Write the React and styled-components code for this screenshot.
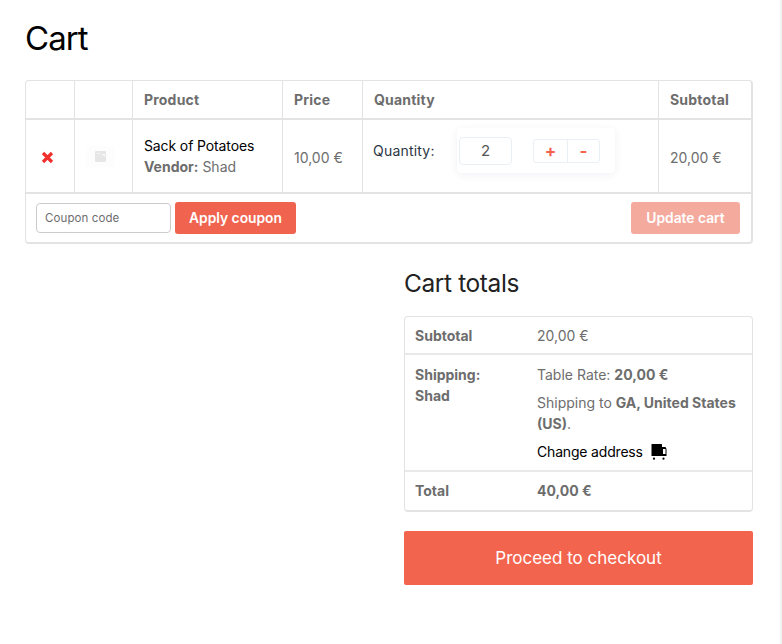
import styled, { createGlobalStyle } from "styled-components";

const GlobalStyle = createGlobalStyle`
  html, body {
    margin: 0;
    padding: 0;
    background: #fff;
  }
  * {
    box-sizing: border-box;
  }
`;

const Page = styled.div`
  width: 782px;
  height: 644px;
  overflow: hidden;
  padding: 0 27px 0 25px;
  border-right: 2px solid #f2f2f2;
  font-family: Inter, "Liberation Sans", sans-serif;
  font-size: 14px;
  color: #6d6d6d;
`;

const Title = styled.h1`
  margin: 0;
  padding-top: 16px;
  height: 80px;
  font-size: 33px;
  line-height: 44px;
  font-weight: 400;
  letter-spacing: -0.9px;
  color: #000;
`;

const Table = styled.table`
  width: 100%;
  table-layout: fixed;
  border-collapse: separate;
  border-spacing: 0;
  border: 1px solid #e3e3e3;
  border-bottom-width: 2px;
  border-right-width: 2px;
  border-radius: 4px;
`;

const HeadCell = styled.th`
  width: ${({ $width }) => $width}px;
  height: 39px;
  padding: 0 11px;
  text-align: left;
  font-weight: 700;
  font-size: 14px;
  letter-spacing: 0.2px;
  border-bottom: 2px solid #e3e3e3;
  border-right: ${({ $last }) => ($last ? "none" : "1px solid #e3e3e3")};
`;

const Cell = styled.td`
  height: 74px;
  padding: ${({ $drop }) => ($drop ? "2px" : "0")} 11px 0;
  border-bottom: 2px solid #e3e3e3;
  border-right: ${({ $last }) => ($last ? "none" : "1px solid #e3e3e3")};
`;

const RemoveCell = styled(Cell)`
  padding-left: 15px;
  line-height: 0;
`;

const ThumbCell = styled(Cell)`
  padding-left: 11px;
  line-height: 0;
`;

const ProductName = styled.div`
  color: #000;
  line-height: 21px;
  letter-spacing: -0.12px;
`;

const Vendor = styled.div`
  line-height: 21px;
`;

const QuantityRow = styled.div`
  display: flex;
  align-items: center;
  margin: -11px 0 0 -1px;
  color: #2c3745;
`;

const QuantityLabel = styled.span`
  width: 84px;
  letter-spacing: 0.2px;
`;

const QuantityBox = styled.div`
  display: flex;
  align-items: center;
  width: 158px;
  height: 45px;
  padding: 0 2px;
  border-radius: 5px;
  background: #fff;
  box-shadow: 0 2px 8px rgba(60, 80, 110, 0.08);
`;

const QuantityValue = styled.div`
  display: flex;
  align-items: center;
  justify-content: center;
  width: 53px;
  height: 28px;
  margin-right: 21px;
  border: 1px solid #eaeff4;
  border-radius: 4px;
  font-size: 15px;
  color: #555;
`;

const Stepper = styled.div`
  display: flex;
  height: 24px;
  border: 1px solid #eaf0f5;
  border-radius: 3px;
`;

const StepButton = styled.button`
  width: ${({ $width }) => $width}px;
  padding: 0;
  border: none;
  border-right: ${({ $divider }) => ($divider ? "1px solid #eaf0f5" : "none")};
  background: none;
  font-family: inherit;
  font-size: 17px;
  line-height: 20px;
  font-weight: 700;
  color: #f4634c;
`;

const ActionsCell = styled.td`
  padding: 0;
`;

const ActionsRow = styled.div`
  display: flex;
  align-items: center;
  justify-content: space-between;
  height: 48px;
  padding: 0 11px 0 10px;
`;

const CouponGroup = styled.div`
  display: flex;
  align-items: center;
  gap: 4px;
`;

const CouponInput = styled.input`
  width: 135px;
  height: 30px;
  padding: 0 8px;
  border: 1px solid #cfcbcb;
  border-radius: 4px;
  outline: none;
  font-family: inherit;
  font-size: 11.5px;
  letter-spacing: 0.1px;

  &::placeholder {
    color: #6d6d6d;
    opacity: 1;
  }
`;

const Button = styled.button`
  height: 32px;
  width: ${({ $width }) => $width}px;
  padding: 0;
  border: none;
  border-radius: 3px;
  background: ${({ $muted }) => ($muted ? "#f5aa9e" : "#f0644f")};
  color: #fff;
  font-family: inherit;
  font-size: 13.8px;
  font-weight: 600;
`;

const Totals = styled.section`
  width: 349px;
  margin: 21px 0 0 auto;
`;

const TotalsTitle = styled.h2`
  margin: 0 0 15px;
  font-size: 24.5px;
  line-height: 36px;
  font-weight: 400;
  letter-spacing: -0.4px;
  color: #222;
`;

const TotalsBox = styled.div`
  border: 1px solid #e3e3e3;
  border-bottom-width: 2px;
  border-radius: 4px;
`;

const TotalsRow = styled.div`
  display: grid;
  grid-template-columns: 132px 1fr;
  padding: ${({ $padding }) => $padding};
  line-height: 21px;
  border-bottom: ${({ $last }) => ($last ? "none" : "2px solid #e9e9e9")};
`;

const TotalsLabel = styled.div`
  padding-left: 10px;
  font-weight: 700;
`;

const TotalsValue = styled.div`
  padding-right: 8px;
`;

const Note = styled.p`
  margin: 7px 0 0;
`;

const Strong = styled.strong`
  font-weight: 700;
`;

const ChangeAddress = styled.div`
  display: flex;
  align-items: center;
  gap: 8px;
  margin-top: 7px;
  color: #000;
  letter-spacing: -0.18px;
`;

const CheckoutButton = styled.button`
  display: block;
  width: 100%;
  height: 54px;
  margin-top: 19px;
  border: none;
  border-radius: 2px;
  background: #f3644e;
  color: #fff;
  font-family: inherit;
  font-size: 17px;
  font-weight: 400;
`;

const RemoveIcon = () => (
  <svg width="13" height="13" viewBox="0 0 13 13" aria-hidden="true">
    <path d="M2 2 L11 11 M11 2 L2 11" stroke="#f0312e" strokeWidth="3.2" />
  </svg>
);

const ThumbIcon = () => (
  <svg width="29" height="21" viewBox="0 0 29 21" aria-hidden="true">
    <rect width="29" height="21" fill="#fdfdfd" />
    <rect x="9" y="5" width="11" height="11" rx="1" fill="#e6e6e6" />
    <path d="M10 7 L14 7 L19 11 L19 8 Z" fill="#f8f8f8" />
  </svg>
);

const TruckIcon = () => (
  <svg width="16" height="16" viewBox="0 0 16 16" aria-hidden="true">
    <rect x="0.5" y="0" width="10.5" height="12" rx="0.5" fill="#000" />
    <path d="M11 3 H14.5 L15.5 5 V12 H11 Z" fill="#000" />
    <rect x="12" y="5" width="2.5" height="5" fill="#fff" />
    <circle cx="3" cy="14.7" r="1.1" fill="#000" />
    <circle cx="12.5" cy="14.7" r="1.1" fill="#000" />
  </svg>
);

const App = () => {
  return (
    <Page>
      <GlobalStyle />
      <Title>Cart</Title>

      <Table>
        <thead>
          <tr>
            <HeadCell $width={49} />
            <HeadCell $width={58} />
            <HeadCell $width={150}>Product</HeadCell>
            <HeadCell $width={80}>Price</HeadCell>
            <HeadCell $width={296}>Quantity</HeadCell>
            <HeadCell $last>Subtotal</HeadCell>
          </tr>
        </thead>
        <tbody>
          <tr>
            <RemoveCell $drop>
              <RemoveIcon />
            </RemoveCell>
            <ThumbCell>
              <ThumbIcon />
            </ThumbCell>
            <Cell>
              <ProductName>Sack of Potatoes</ProductName>
              <Vendor>
                <Strong>Vendor:</Strong> Shad
              </Vendor>
            </Cell>
            <Cell $drop>10,00 €</Cell>
            <Cell>
              <QuantityRow>
                <QuantityLabel>Quantity:</QuantityLabel>
                <QuantityBox>
                  <QuantityValue>2</QuantityValue>
                  <Stepper>
                    <StepButton $width={34} $divider>+</StepButton>
                    <StepButton $width={31}>-</StepButton>
                  </Stepper>
                </QuantityBox>
              </QuantityRow>
            </Cell>
            <Cell $drop $last>20,00 €</Cell>
          </tr>
          <tr>
            <ActionsCell colSpan={6}>
              <ActionsRow>
                <CouponGroup>
                  <CouponInput placeholder="Coupon code" />
                  <Button $width={121}>Apply coupon</Button>
                </CouponGroup>
                <Button $width={109} $muted>Update cart</Button>
              </ActionsRow>
            </ActionsCell>
          </tr>
        </tbody>
      </Table>

      <Totals>
        <TotalsTitle>Cart totals</TotalsTitle>
        <TotalsBox>
          <TotalsRow $padding="8px 0 7px">
            <TotalsLabel>Subtotal</TotalsLabel>
            <TotalsValue>20,00 €</TotalsValue>
          </TotalsRow>
          <TotalsRow $padding="9px 0 8px">
            <TotalsLabel>
              Shipping:
              <br />
              Shad
            </TotalsLabel>
            <TotalsValue>
              Table Rate: <Strong>20,00 €</Strong>
              <Note>
                Shipping to <Strong>GA, United States</Strong> <Strong>(US)</Strong>.
              </Note>
              <ChangeAddress>
                Change address <TruckIcon />
              </ChangeAddress>
            </TotalsValue>
          </TotalsRow>
          <TotalsRow $padding="8px 0 9px" $last>
            <TotalsLabel>Total</TotalsLabel>
            <TotalsValue>
              <Strong>40,00 €</Strong>
            </TotalsValue>
          </TotalsRow>
        </TotalsBox>
        <CheckoutButton>Proceed to checkout</CheckoutButton>
      </Totals>
    </Page>
  );
};

export default App;
